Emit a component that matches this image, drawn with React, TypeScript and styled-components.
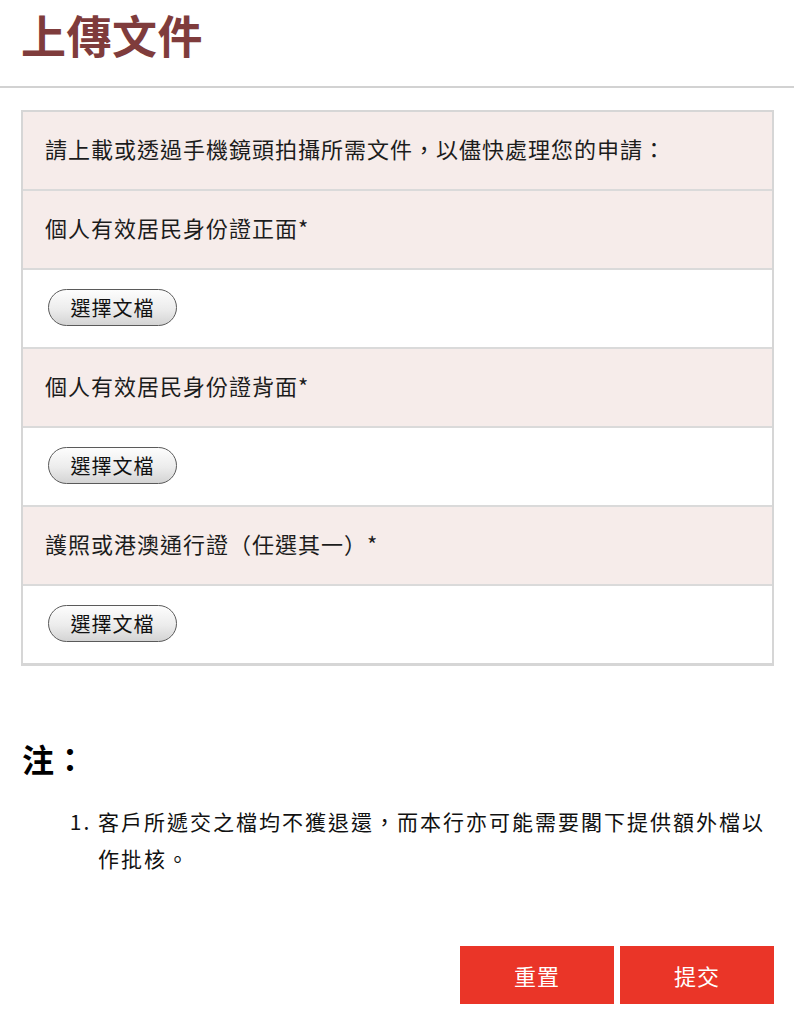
import React from "react";
import styled, { createGlobalStyle } from "styled-components";

const GlobalStyle = createGlobalStyle`
  html, body { margin: 0; padding: 0; background: #ffffff; }
  body {
    font-family: "Noto Sans CJK TC", "Noto Sans", "Liberation Sans", sans-serif;
    color: #1a1a1a;
  }
  * { box-sizing: border-box; }
`;

const Page = styled.div`
  width: 794px;
  min-height: 1024px;
  background: #ffffff;
`;

const Header = styled.header`
  height: 88px;
  padding: 0 21px;
  display: flex;
  align-items: flex-start;
  border-bottom: 2px solid #d2d2d2;
`;

const Title = styled.h1`
  margin: 0;
  padding-top: 4px;
  font-size: 45px;
  line-height: 62px;
  font-weight: 700;
  color: #7f3c3c;
  letter-spacing: 0.5px;
`;

const Main = styled.main`
  padding: 22px 20px 0 21px;
`;

const Table = styled.div`
  border: 2px solid #d6d6d6;
  border-bottom-width: 3px;
  display: flex;
  flex-direction: column;
`;

const Row = styled.div<{ $tone: "label" | "input" }>`
  height: 79px;
  display: flex;
  align-items: center;
  padding: 0 21px 0 22px;
  background: ${(p) => (p.$tone === "label" ? "#f6ecea" : "#ffffff")};
  border-top: 2px solid #dadada;
  &:first-child {
    border-top: none;
    height: 77px;
  }
`;

const Label = styled.span`
  font-size: 22px;
  line-height: 30px;
  letter-spacing: 1px;
  color: #1c1c1c;
  margin-top: -6px;
`;

const FileButton = styled.button`
  margin-left: 3px;
  margin-top: -2px;
  width: 129px;
  height: 37px;
  border: 1.5px solid #5a5a5a;
  border-radius: 19px;
  background: linear-gradient(#fdfdfd 0%, #ececec 55%, #d4d4d4 100%);
  font-family: inherit;
  font-size: 20px;
  line-height: 1;
  color: #111;
  letter-spacing: 1px;
  padding: 0;
  display: flex;
  align-items: center;
  justify-content: center;
  cursor: pointer;
`;

const Notes = styled.section`
  padding: 70px 20px 0 22px;
`;

const NoteTitle = styled.h2`
  margin: 0;
  font-size: 32px;
  line-height: 44px;
  font-weight: 700;
  color: #000;
`;

const NoteList = styled.ol`
  margin: 23px 0 0;
  padding: 0 0 0 76px;
  font-size: 21px;
  line-height: 37px;
  letter-spacing: 2px;
  color: #111;
  li { padding-left: 0; }
`;

const Actions = styled.div`
  display: flex;
  justify-content: flex-end;
  gap: 6px;
  padding: 69px 20px 0 0;
`;

const ActionButton = styled.button`
  width: 154px;
  height: 58px;
  border: none;
  background: #ea3528;
  color: #ffffff;
  font-family: inherit;
  font-size: 22px;
  letter-spacing: 1px;
  cursor: pointer;
`;

const rows: { tone: "label" | "input"; text?: string }[] = [
  { tone: "label", text: "請上載或透過手機鏡頭拍攝所需文件，以儘快處理您的申請：" },
  { tone: "label", text: "個人有效居民身份證正面*" },
  { tone: "input" },
  { tone: "label", text: "個人有效居民身份證背面*" },
  { tone: "input" },
  { tone: "label", text: "護照或港澳通行證（任選其一）*" },
  { tone: "input" },
];

export default function App() {
  return (
    <Page>
      <GlobalStyle />
      <Header>
        <Title>上傳文件</Title>
      </Header>
      <Main>
        <Table>
          {rows.map((r, i) => (
            <Row key={i} $tone={r.tone}>
              {r.text ? <Label>{r.text}</Label> : <FileButton type="button">選擇文檔</FileButton>}
            </Row>
          ))}
        </Table>
      </Main>
      <Notes>
        <NoteTitle>注：</NoteTitle>
        <NoteList>
          <li>客戶所遞交之檔均不獲退還，而本行亦可能需要閣下提供額外檔以作批核。</li>
        </NoteList>
      </Notes>
      <Actions>
        <ActionButton type="button">重置</ActionButton>
        <ActionButton type="button">提交</ActionButton>
      </Actions>
    </Page>
  );
}
